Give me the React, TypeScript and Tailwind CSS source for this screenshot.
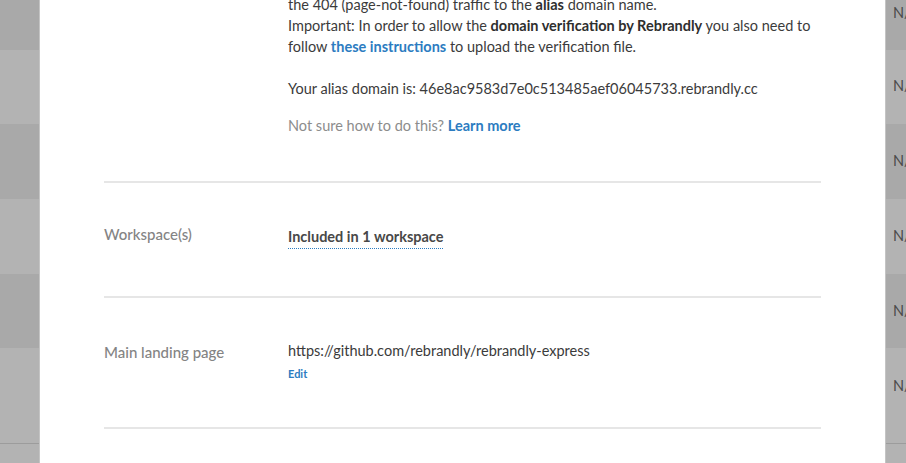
import React from "react"

const rows = [
  { h: "h-[50px]", tone: "bg-[#a9a9a9]", pad: "pt-[5px]" },
  { h: "h-[74px]", tone: "bg-[#b3b3b3]", pad: "pt-[28px]" },
  { h: "h-[75px]", tone: "bg-[#a9a9a9]", pad: "pt-[29px]" },
  { h: "h-[75px]", tone: "bg-[#b3b3b3]", pad: "pt-[29px]" },
  { h: "h-[74px]", tone: "bg-[#a9a9a9]", pad: "pt-[29px]" },
  { h: "h-[95px]", tone: "bg-[#b3b3b3]", pad: "pt-[30px]" },
]

const Backdrop: React.FC = () => (
  <div className="flex flex-col">
    {rows.map((row, i) => (
      <div key={i} className={`${row.h} ${row.tone} flex justify-end ${row.pad}`}>
        <span className="w-[13px] overflow-hidden whitespace-nowrap text-[14.5px] leading-[16px] text-[#4a4a4a]">N/A</span>
      </div>
    ))}
    <div className="h-px bg-[#9c9c9c]" />
    <div className="h-[40px] bg-[#b3b3b3]" />
  </div>
)

const Row: React.FC<{ label: string; children: React.ReactNode; className?: string }> = ({ label, children, className }) => (
  <div className={`flex border-b-2 border-[#e6e6e6] ${className ?? ""}`}>
    <div className="w-[184px] shrink-0 text-[15px] leading-[20px] font-medium text-[#848484]">{label}</div>
    <div className="flex-1">{children}</div>
  </div>
)

export default function App() {
  return (
    <div className="relative h-[463px] w-[906px] overflow-hidden font-['Lato',sans-serif]">
      <Backdrop />

      <div className="absolute inset-y-0 left-[39px] right-[20px] overflow-hidden border-x border-[#c4c4c4] bg-white">
        <div className="-mt-[6px] px-[64px]">
          <div className="flex border-b-2 border-[#e6e6e6] pb-[45px]">
            <div className="w-[184px] shrink-0" />
            <div className="flex-1 text-[14.5px] leading-[21px] text-[#3b3b3b]">
              <p>
                the 404 (page-not-found) traffic to the <b className="font-bold text-[#2e2e2e]">alias</b> domain name.
              </p>
              <p>
                Important: In order to allow the <b className="font-bold text-[#2e2e2e]">domain verification by Rebrandly</b> you also need to
                follow <a className="font-bold text-[#2c7cc1]">these instructions</a> to upload the verification file.
              </p>
              <p className="mt-[21px]">Your alias domain is: 46e8ac9583d7e0c513485aef06045733.rebrandly.cc</p>
              <p className="mt-[16px] text-[#8c8c8c]">
                Not sure how to do this? <a className="font-bold text-[#2c7cc1]">Learn more</a>
              </p>
            </div>
          </div>

          <Row label="Workspace(s)" className="pt-[41px] pb-[48px]">
            <span className="border-b border-dotted border-[#2c7cc1] pb-[3px] text-[14.5px] leading-[20px] font-bold text-[#484848]">
              Included in 1 workspace
            </span>
          </Row>

          <Row label="Main landing page" className="pt-[44px] pb-[43px]">
            <div className="text-[14.5px] leading-[18px] text-[#3b3b3b]">https://github.com/rebrandly/rebrandly-express</div>
            <a className="text-[11px] font-bold leading-[16px] text-[#2c7cc1]">Edit</a>
          </Row>
        </div>
      </div>
    </div>
  )
}
